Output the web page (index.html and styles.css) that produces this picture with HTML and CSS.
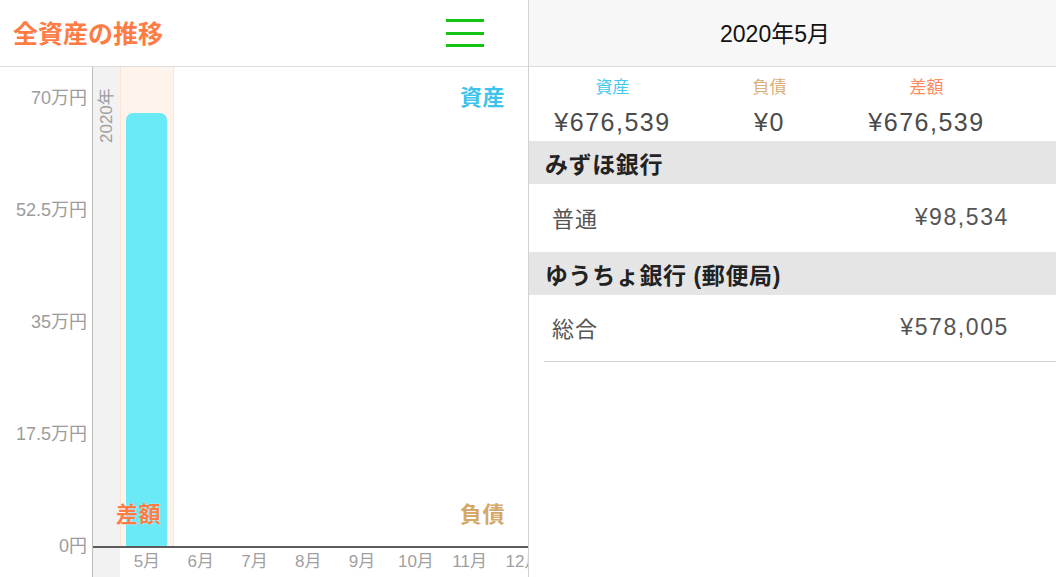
FILE: index.html
```html
<!DOCTYPE html>
<html lang="ja">
<head>
<meta charset="utf-8">
<title>全資産の推移</title>
<link rel="stylesheet" href="styles.css">
</head>
<body>
<div class="app">
  <section class="left">
    <header class="lhead">
      <h1 class="title">全資産の推移</h1>
      <div class="burger"><span></span><span></span><span></span></div>
    </header>
    <div class="chart">
      <div class="yaxis">
        <div class="ylab">70万円</div>
        <div class="ylab">52.5万円</div>
        <div class="ylab">35万円</div>
        <div class="ylab">17.5万円</div>
        <div class="ylab">0円</div>
      </div>
      <div class="plot">
        <div class="band"><span class="year">2020年</span></div>
        <div class="slot sel"><div class="bar" style="height:433px"></div></div>
        <div class="axis"></div>
        <div class="mlab m1">5月</div>
        <div class="mlab m2">6月</div>
        <div class="mlab m3">7月</div>
        <div class="mlab m4">8月</div>
        <div class="mlab m5">9月</div>
        <div class="mlab m6">10月</div>
        <div class="mlab m7">11月</div>
        <div class="mlab m8">12月</div>
        <span class="tag tag-asset">資産</span>
        <span class="tag tag-diff">差額</span>
        <span class="tag tag-debt">負債</span>
      </div>
    </div>
  </section>
  <section class="right">
    <header class="rhead"><span class="month">2020年5月</span></header>
    <div class="summary">
      <div class="sum">
        <div class="slab c-asset">資産</div>
        <div class="sval">¥676,539</div>
      </div>
      <div class="sum">
        <div class="slab c-debt">負債</div>
        <div class="sval">¥0</div>
      </div>
      <div class="sum">
        <div class="slab c-diff">差額</div>
        <div class="sval">¥676,539</div>
      </div>
    </div>
    <div class="sec">みずほ銀行</div>
    <div class="row">
      <span class="rlab">普通</span>
      <span class="amt">¥98,534</span>
    </div>
    <div class="sec">ゆうちょ銀行 (郵便局)</div>
    <div class="row last">
      <span class="rlab">総合</span>
      <span class="amt">¥578,005</span>
    </div>
  </section>
</div>
</body>
</html>
```

FILE: styles.css
```css
* { box-sizing: border-box; }
html, body { margin: 0; padding: 0; }
body {
  width: 1056px;
  height: 577px;
  overflow: hidden;
  background: #fff;
  font-family: "Liberation Sans", "Noto Sans CJK JP", sans-serif;
}
.app { display: flex; height: 577px; }

/* left panel */
.left {
  width: 529px;
  border-right: 1px solid #d2d2d2;
  display: flex;
  flex-direction: column;
}
.lhead {
  height: 67px;
  border-bottom: 1px solid #dcdcdc;
  display: flex;
  align-items: center;
  justify-content: space-between;
  padding: 0 44px 0 13px;
}
.title {
  margin: 0;
  font-family: "Noto Sans CJK JP", sans-serif;
  font-weight: 700;
  font-size: 25px;
  line-height: 30px;
  color: #ff7c45;
  padding-bottom: 2px;
}
.burger { display: flex; flex-direction: column; gap: 9.5px; }
.burger span { display: block; width: 38px; height: 3px; background: #14c414; }

.chart { flex: 1; display: flex; }
.yaxis {
  width: 92px;
  padding: 20px 5px 0 0;
  display: flex;
  flex-direction: column;
  align-items: flex-end;
  gap: 90px;
}
.ylab { font-size: 18px; line-height: 22px; color: #9c9c9c; white-space: nowrap; }

.plot {
  flex: 1;
  position: relative;
  overflow: hidden;
  border-left: 1px solid #bdbdbd;
  display: grid;
  grid-template-columns: 27px repeat(8, 53.8px);
  grid-template-rows: 479px 2px 1fr;
}
.band {
  grid-column: 1;
  grid-row: 1 / 4;
  background: #f2f2f2;
  display: flex;
  justify-content: center;
  padding-top: 16px;
}
.year {
  writing-mode: vertical-rl;
  text-orientation: sideways;
  transform: rotate(180deg);
  font-size: 17px;
  color: #a0a0a0;
  height: 60px;
  line-height: 20px;
}
.slot { grid-row: 1; display: flex; justify-content: center; align-items: flex-end; }
.sel {
  grid-column: 2;
  background: #fef4eb;
  border-left: 1px solid #fde4d4;
  border-right: 1px solid #fde4d4;
}
.bar { width: 41px; background: #6ae9f7; border-radius: 7px 7px 0 0; }
.axis { grid-column: 1 / -1; grid-row: 2; background: #5c5c5c; }
.mlab {
  grid-row: 3;
  text-align: center;
  font-size: 17px;
  line-height: 20px;
  padding-top: 4px;
  color: #a0a0a0;
  white-space: nowrap;
}
.m1 { grid-column: 2; } .m2 { grid-column: 3; } .m3 { grid-column: 4; } .m4 { grid-column: 5; }
.m5 { grid-column: 6; } .m6 { grid-column: 7; } .m7 { grid-column: 8; } .m8 { grid-column: 9; }

.tag {
  position: absolute;
  font-family: "Noto Sans CJK JP", sans-serif;
  font-weight: 700;
  font-size: 22px;
  line-height: 24px;
  letter-spacing: 0.5px;
}
.tag-asset { top: 16px; right: 23px; color: #3ec3ea; }
.tag-diff { top: 433px; left: 23px; color: #ff7c45; text-shadow: 0 0 2px rgba(255,255,255,0.7); }
.tag-debt { top: 433px; right: 23px; color: #d4a866; }

/* right panel */
.right { flex: 1; display: flex; flex-direction: column; }
.rhead {
  height: 67px;
  background: #f7f7f7;
  border-bottom: 1px solid #dcdcdc;
  display: flex;
  align-items: center;
  justify-content: center;
  padding: 0 35px 2px 0;
}
.month { font-size: 23px; color: #111; }

.summary {
  height: 74px;
  display: grid;
  grid-template-columns: repeat(3, 157px);
  padding: 11px 0 0 5px;
}
.sum { text-align: center; }
.slab { font-size: 17px; line-height: 20px; }
.sval { margin-top: 10px; font-size: 25px; line-height: 28px; letter-spacing: 1.5px; color: #4a4a4a; }
.c-asset { color: #45c8ee; }
.c-debt { color: #d9b079; }
.c-diff { color: #ff8a5c; }

.sec {
  height: 43px;
  background: #e5e5e5;
  padding-left: 16px;
  display: flex;
  align-items: center;
  font-weight: 700;
  font-size: 23px;
  letter-spacing: 0.6px;
  color: #222;
}
.row {
  height: 68px;
  display: flex;
  align-items: center;
  justify-content: space-between;
  padding: 0 47px 2px 23px;
}
.row.last {
  height: 67px;
  margin-left: 15px;
  padding-left: 8px;
  border-bottom: 1px solid #d5d5d5;
}
.rlab { font-size: 22px; letter-spacing: 1px; color: #555; }
.amt { font-size: 23px; letter-spacing: 1.6px; color: #555; }
```
